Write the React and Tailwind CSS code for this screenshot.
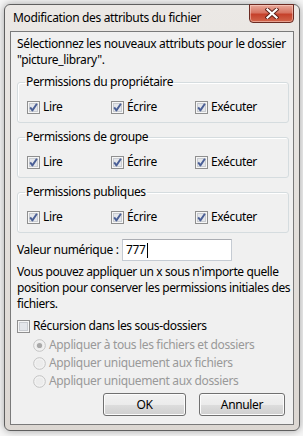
import React from 'react';

const font = { fontFamily: '"Noto Sans", "Liberation Sans", sans-serif' };

const CheckBox = ({ checked }) => (
    <svg width="13" height="13" viewBox="0 0 13 13" className="shrink-0">
        <rect x="0.5" y="0.5" width="12" height="12" fill="#f6f6f6" stroke="#8f8f8f" />
        <rect x="2.5" y="2.5" width="8" height="8" fill="#e4e6ea" stroke="#c9ccd1" />
        {checked && (
            <path d="M3.2 6.4 L5.4 9.4 L9.9 2.8" stroke="#4a5f96" strokeWidth="1.9" fill="none" strokeLinejoin="round" />
        )}
    </svg>
);

const Radio = ({ selected }) => (
    <svg width="13" height="13" viewBox="0 0 13 13" className="shrink-0">
        <circle cx="6.5" cy="6.5" r="5.8" fill="#f4f4f4" stroke="#c2c2c2" />
        <circle cx="6.5" cy="6.5" r="4" fill="#ececec" />
        {selected && <circle cx="6.5" cy="6.5" r="2.6" fill="#a8a8a8" />}
    </svg>
);

const PermGroup = ({ title }) => (
    <fieldset className="mt-[6px] mr-[4px] border border-[#d5dcdf] rounded-[3px] pl-[7px] pb-[8px] shadow-[inset_1px_1px_0_#ffffff]">
        <legend className="px-[1px] leading-[16px]">{title}</legend>
        <div className="mt-[8px] ml-[2px] grid grid-cols-[84px_84px_1fr] h-[16px]">
            {['Lire', 'Écrire', 'Exécuter'].map((label) => (
                <label key={label} className="flex items-center gap-[3px]">
                    <CheckBox checked />
                    <span>{label}</span>
                </label>
            ))}
        </div>
    </fieldset>
);

const WinButton = ({ children, width }) => (
    <button
        className={`${width} h-[23px] rounded-[3px] border border-[#707070] bg-[linear-gradient(#f2f2f2_0%,#ebebeb_50%,#dddddd_50%,#cfcfcf_100%)] shadow-[inset_0_0_0_1px_#fcfcfc] text-black`}
    >
        {children}
    </button>
);

const App = () => {
    return (
        <div className="w-[303px] h-[436px] bg-[#f7f7f7] overflow-hidden text-[12px] tracking-[-0.35px] text-black" style={font}>
            <div className="ml-[4px] mt-[4px] w-[296px] h-[427px] rounded-[6px] border border-[#5f5f5f] bg-[linear-gradient(#ebe8e5,#dcd7d2)] shadow-[0_0_8px_rgba(0,0,0,0.35)] flex flex-col">
                <div className="h-[26px] flex items-start justify-between pl-[8px] pr-[5px]">
                    <span className="mt-[5px] leading-[16px]">Modification des attributs du fichier</span>
                    <button className="w-[45px] h-[19px] -mt-px rounded-b-[4px] border border-[#6a2a22] bg-[linear-gradient(#e9a99a_0%,#d77462_45%,#c5412b_55%,#d2664c_100%)] shadow-[inset_0_0_0_1px_rgba(255,220,210,0.5)] flex items-center justify-center">
                        <svg width="14" height="11" viewBox="0 0 14 11">
                            <path d="M2.5 1.5 L11.5 9.5 M11.5 1.5 L2.5 9.5" stroke="#5a2018" strokeWidth="4" strokeLinecap="square" />
                            <path d="M2.5 1.5 L11.5 9.5 M11.5 1.5 L2.5 9.5" stroke="#ffffff" strokeWidth="2.2" strokeLinecap="square" />
                        </svg>
                    </button>
                </div>

                <div className="mx-[5px] h-[394px] border border-[#7a7a7a] bg-[#f0f0f0] pl-[6px] pt-[4px]">
                    <p className="leading-[16px] pr-[4px]">
                        Sélectionnez les nouveaux attributs pour le dossier "picture_library".
                    </p>

                    <PermGroup title="Permissions du propriétaire" />
                    <PermGroup title="Permissions de groupe" />
                    <PermGroup title="Permissions publiques" />

                    <div className="mt-[6px] flex items-center h-[22px]">
                        <span className="w-[105px] whitespace-nowrap">Valeur numérique :</span>
                        <div className="w-[110px] h-[22px] bg-white border border-[#c5cbd3] border-t-[#abadb3] flex items-center pl-[3px]">
                            <span>777</span>
                            <span className="w-px h-[15px] bg-black ml-px" />
                        </div>
                    </div>

                    <p className="mt-[3px] leading-[16px] tracking-[-0.4px]">
                        Vous pouvez appliquer un x sous n'importe quelle position pour conserver les permissions initiales des fichiers.
                    </p>

                    <label className="mt-[6px] flex items-center gap-[3px] h-[16px]">
                        <CheckBox />
                        <span>Récursion dans les sous-dossiers</span>
                    </label>

                    <div className="mt-[2px] ml-[16px] flex flex-col text-[#999999]">
                        <div className="h-[18px] flex items-center gap-[3px]">
                            <Radio selected />
                            <span>Appliquer à tous les fichiers et dossiers</span>
                        </div>
                        <div className="h-[18px] flex items-center gap-[3px]">
                            <Radio />
                            <span>Appliquer uniquement aux fichiers</span>
                        </div>
                        <div className="h-[18px] flex items-center gap-[3px]">
                            <Radio />
                            <span>Appliquer uniquement aux dossiers</span>
                        </div>
                    </div>

                    <div className="mt-[3px] flex justify-end gap-[13px] pr-[8px]">
                        <WinButton width="w-[83px]">OK</WinButton>
                        <WinButton width="w-[86px]">Annuler</WinButton>
                    </div>
                </div>
            </div>
        </div>
    );
};

export default App;
